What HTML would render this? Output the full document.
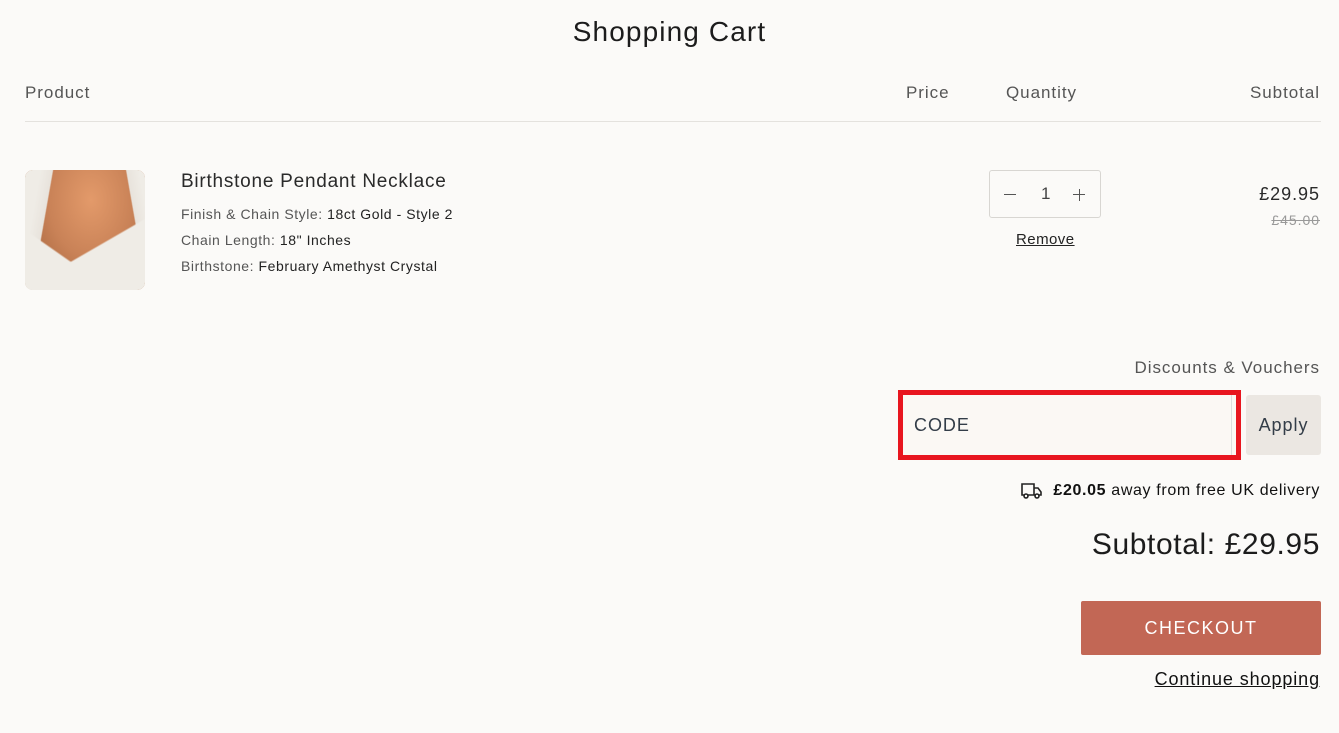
<!DOCTYPE html>
<html><head><meta charset="utf-8"><style>
*{box-sizing:border-box;margin:0;padding:0}
body{width:1339px;height:733px;background:#fbfaf8;font-family:"Liberation Sans",sans-serif;color:#222;position:relative;overflow:hidden;letter-spacing:0.06em}
.a{position:absolute;white-space:nowrap}
</style></head><body>
<div class="a" style="left:0;width:1339px;top:16px;text-align:center;font-size:28px;color:#1c1c1c;letter-spacing:0.04em">Shopping Cart</div>
<div class="a" style="left:25px;top:83px;font-size:17px;color:#555">Product</div>
<div class="a" style="left:906px;top:83px;font-size:17px;color:#555">Price</div>
<div class="a" style="left:1006px;top:83px;font-size:17px;color:#555">Quantity</div>
<div class="a" style="right:19px;top:83px;font-size:17px;color:#555">Subtotal</div>
<div class="a" style="left:25px;top:121px;width:1296px;height:1px;background:#e4e2de"></div>
<div class="a" style="left:25px;top:170px;width:120px;height:120px;border-radius:8px;overflow:hidden;background:radial-gradient(ellipse at 55% 25%,#e39a6a 0%,#c98257 45%,#a8673f 80%)">
<div style="position:absolute;left:0;top:0;width:40px;height:120px;background:linear-gradient(100deg,#efece6 0 25%,#e8e3dc 45%,transparent 47%)"></div>
<div style="position:absolute;right:0;top:0;width:40px;height:120px;background:linear-gradient(260deg,#efece6 0 10%,#e8e3dc 30%,transparent 32%)"></div>
<div style="position:absolute;left:0;top:0;width:120px;height:120px;background:linear-gradient(150deg,transparent 62%,#efece6 63%)"></div>
<div style="position:absolute;left:0;top:0;width:120px;height:120px;background:linear-gradient(215deg,transparent 70%,#efece6 71%)"></div></div>
<div class="a" style="left:181px;top:171px;font-size:19px;color:#2a2a2a;letter-spacing:0.04em">Birthstone Pendant Necklace</div>
<div class="a" style="left:181px;top:206px;font-size:14px;color:#555;letter-spacing:0.04em">Finish &amp; Chain Style: <span style="color:#222">18ct Gold - Style 2</span></div>
<div class="a" style="left:181px;top:232px;font-size:14px;color:#555;letter-spacing:0.04em">Chain Length: <span style="color:#222">18" Inches</span></div>
<div class="a" style="left:181px;top:258px;font-size:14px;color:#555;letter-spacing:0.04em">Birthstone: <span style="color:#222">February Amethyst Crystal</span></div>
<div class="a" style="left:989px;top:170px;width:112px;height:48px;border:1px solid #d8d6d2;border-radius:3px;font-size:17px;color:#444">
<span class="a" style="left:14px;top:23px;width:12px;height:1px;background:#555"></span><span class="a" style="left:51px;top:13px">1</span><span class="a" style="left:83px;top:23px;width:12px;height:1px;background:#555"></span><span class="a" style="left:88.5px;top:18px;width:1px;height:12px;background:#555"></span></div>
<div class="a" style="left:1016px;top:231px;font-size:15px;text-decoration:underline;color:#222;letter-spacing:0.03em">Remove</div>
<div class="a" style="right:19px;top:184px;font-size:18px;color:#2a2a2a">£29.95</div>
<div class="a" style="right:19px;top:212px;font-size:14px;color:#999;text-decoration:line-through">£45.00</div>
<div class="a" style="right:19px;top:358px;font-size:17px;color:#555">Discounts &amp; Vouchers</div>
<div class="a" style="left:898px;top:390px;width:343px;height:70px;border:5px solid #e8161f;background:#fbf8f4"><div style="position:absolute;right:4px;top:0;bottom:0;width:1px;background:#ddd"></div></div>
<div class="a" style="left:914px;top:415px;font-size:18px;color:#333d48">CODE</div>
<div class="a" style="left:1246px;top:395px;width:75px;height:60px;border-radius:3px;background:#ebe7e2;font-size:18px;color:#333d48;text-align:center;line-height:60px">Apply</div>
<svg class="a" style="left:1021px;top:482px" width="22" height="18" viewBox="0 0 22 18" fill="none" stroke="#222" stroke-width="1.6"><path d="M1 2h12v11H1zM13 6h4l3 4v3h-7"/><circle cx="5" cy="14" r="2" fill="#fbfaf8"/><circle cx="16" cy="14" r="2" fill="#fbfaf8"/></svg>
<div class="a" style="right:19px;top:482px;font-size:16px;color:#111;letter-spacing:0.04em"><b>£20.05</b> away from free UK delivery</div>
<div class="a" style="right:19px;top:528px;font-size:30px;color:#1c1c1c;letter-spacing:0.02em">Subtotal: £29.95</div>
<div class="a" style="left:1081px;top:601px;width:240px;height:54px;background:#c26755;border-radius:2px;color:#fff;font-size:18px;letter-spacing:1.5px;text-align:center;line-height:54px">CHECKOUT</div>
<div class="a" style="right:19px;top:669px;font-size:18px;text-decoration:underline;color:#111;letter-spacing:0.05em">Continue shopping</div>
</body></html>
